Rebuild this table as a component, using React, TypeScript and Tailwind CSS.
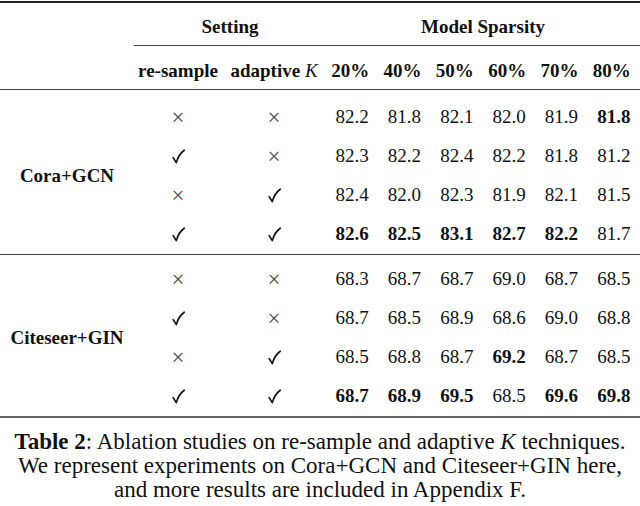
import React from "react";

const Check = () => (
  <svg width="13" height="15" viewBox="0 0 13 15" className="inline-block">
    <path d="M1.2 8.6 L4.3 13.6 C5.6 8.6 8.2 4.2 12.2 1.2" fill="none" stroke="#111" strokeWidth="1.7" strokeLinecap="round" strokeLinejoin="round" />
  </svg>
);

const Cross = () => <span className="text-[23px] leading-[23px] text-[#444]">×</span>;

type Cell = { v: string; b?: boolean };

const groups: { name: string; rows: { rs: boolean; ak: boolean; vals: Cell[] }[] }[] = [
  {
    name: "Cora+GCN",
    rows: [
      { rs: false, ak: false, vals: [{ v: "82.2" }, { v: "81.8" }, { v: "82.1" }, { v: "82.0" }, { v: "81.9" }, { v: "81.8", b: true }] },
      { rs: true, ak: false, vals: [{ v: "82.3" }, { v: "82.2" }, { v: "82.4" }, { v: "82.2" }, { v: "81.8" }, { v: "81.2" }] },
      { rs: false, ak: true, vals: [{ v: "82.4" }, { v: "82.0" }, { v: "82.3" }, { v: "81.9" }, { v: "82.1" }, { v: "81.5" }] },
      { rs: true, ak: true, vals: [{ v: "82.6", b: true }, { v: "82.5", b: true }, { v: "83.1", b: true }, { v: "82.7", b: true }, { v: "82.2", b: true }, { v: "81.7" }] },
    ],
  },
  {
    name: "Citeseer+GIN",
    rows: [
      { rs: false, ak: false, vals: [{ v: "68.3" }, { v: "68.7" }, { v: "68.7" }, { v: "69.0" }, { v: "68.7" }, { v: "68.5" }] },
      { rs: true, ak: false, vals: [{ v: "68.7" }, { v: "68.5" }, { v: "68.9" }, { v: "68.6" }, { v: "69.0" }, { v: "68.8" }] },
      { rs: false, ak: true, vals: [{ v: "68.5" }, { v: "68.8" }, { v: "68.7" }, { v: "69.2", b: true }, { v: "68.7" }, { v: "68.5" }] },
      { rs: true, ak: true, vals: [{ v: "68.7", b: true }, { v: "68.9", b: true }, { v: "69.5", b: true }, { v: "68.5" }, { v: "69.6", b: true }, { v: "69.8", b: true }] },
    ],
  },
];

const pcts = ["20%", "40%", "50%", "60%", "70%", "80%"];

export default function App() {
  return (
    <div className="w-[640px] h-[506px] bg-white text-[#111] font-['Liberation_Serif'] text-[19px] overflow-hidden">
      <div className="pt-px">
        <div className="border-t-2 border-[#222]" />
        {/* header row 1 */}
        <div className="grid grid-cols-[134px_192px_1fr] h-[42px] items-center font-bold">
          <div />
          <div className="text-center pt-[7px]">Setting</div>
          <div className="text-center pt-[7px]">Model Sparsity</div>
        </div>
        <div className="ml-[134px] border-t border-[#444]" />
        {/* header row 2 */}
        <div className="grid grid-cols-[134px_88px_104px_repeat(6,1fr)] h-[43px] items-center font-bold">
          <div />
          <div className="text-center pt-[8px]">re-sample</div>
          <div className="text-center pt-[8px] whitespace-nowrap">
            adaptive <span className="italic font-normal">K</span>
          </div>
          {pcts.map((p) => (
            <div key={p} className="text-center pt-[8px] pr-[4px]">{p}</div>
          ))}
        </div>
        <div className="border-t-[1.5px] border-[#444]" />
        {groups.map((g, gi) => (
          <div key={g.name}>
            {gi > 0 && <div className="border-t-[1.5px] border-[#444]" />}
            <div className={`grid grid-cols-[134px_1fr] ${gi === 0 ? "pt-[8px]" : "pt-[5px]"}`}>
              <div className="flex items-center justify-center font-bold">{g.name}</div>
              <div className="flex flex-col">
                {g.rows.map((r, ri) => (
                  <div key={ri} className="grid grid-cols-[88px_104px_repeat(6,1fr)] h-[39px] items-center">
                    <div className="flex justify-center">{r.rs ? <Check /> : <Cross />}</div>
                    <div className="flex justify-center">{r.ak ? <Check /> : <Cross />}</div>
                    {r.vals.map((c, ci) => (
                      <div key={ci} className={`text-center ${c.b ? "font-bold" : ""}`}>{c.v}</div>
                    ))}
                  </div>
                ))}
              </div>
            </div>
          </div>
        ))}
        <div className="border-t-2 border-[#666]" />
      </div>
      <div className="mt-[12px] text-center text-[23px] leading-[24px] text-[#111]">
        <div><span className="font-bold">Table 2</span>: Ablation studies on re-sample and adaptive <span className="italic">K</span> techniques.</div>
        <div>We represent experiments on Cora+GCN and Citeseer+GIN here,</div>
        <div>and more results are included in Appendix F.</div>
      </div>
    </div>
  );
}
